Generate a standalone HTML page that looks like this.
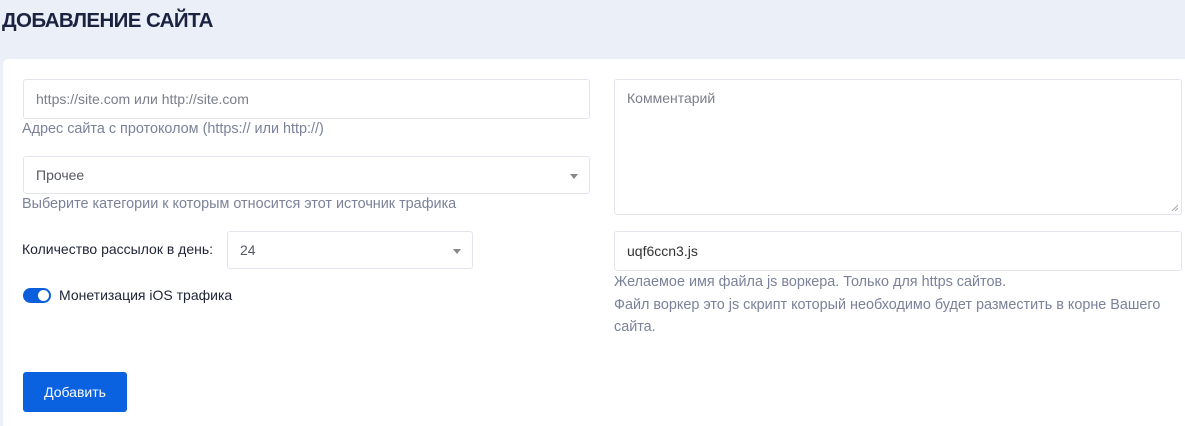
<!DOCTYPE html>
<html><head><meta charset="utf-8"><style>
*{box-sizing:border-box;margin:0;padding:0}
html,body{width:1185px;height:426px;overflow:hidden}
body{background:#ebeff8;font-family:"Liberation Sans",Arial,sans-serif;position:relative}
h1{position:absolute;left:2px;top:9px;font-size:20.5px;font-weight:bold;color:#1a2340;letter-spacing:-0.6px}
.card{position:absolute;left:3px;top:59px;width:1190px;height:380px;background:#fff;border-radius:5px}
.in{position:absolute;border:1px solid #e2e5ec;border-radius:3px;background:#fff;font-size:14px;color:#575962;padding-left:12px}
.ph{color:#7a7e8a}
.help{position:absolute;font-size:14.4px;color:#7b8299}
.arr{position:absolute;right:11px;top:17px;width:0;height:0;border-left:4px solid transparent;border-right:4px solid transparent;border-top:5px solid #888}
</style></head><body>
<h1>ДОБАВЛЕНИЕ САЙТА</h1>
<div class="card"></div>
<div class="in ph" style="left:23px;top:79px;width:567px;height:40px;line-height:38px">https://site.com или http://site.com</div>
<div class="help" style="left:22px;top:121px">Адрес сайта с протоколом (https:// или http://)</div>
<div class="in" style="left:23px;top:156px;width:567px;height:38px;line-height:36px">Прочее<span class="arr"></span></div>
<div class="help" style="left:22px;top:196px">Выберите категории к которым относится этот источник трафика</div>
<div style="position:absolute;left:22px;top:241px;font-size:14px;color:#1e2235">Количество рассылок в день:</div>
<div class="in" style="left:227px;top:231px;width:246px;height:38px;line-height:36px">24<span class="arr"></span></div>
<div style="position:absolute;left:23px;top:288px;width:28px;height:15px;border-radius:8px;background:#0b5fdc"><div style="position:absolute;right:2px;top:2px;width:11px;height:11px;border-radius:50%;background:#fff"></div></div>
<div style="position:absolute;left:59px;top:287px;font-size:14px;color:#1e2235">Монетизация iOS трафика</div>
<div style="position:absolute;left:23px;top:372px;width:104px;height:40px;border-radius:3px;background:#0b62e0;color:#fff;font-size:14px;line-height:40px;text-align:center">Добавить</div>
<div class="in ph" style="left:614px;top:79px;width:568px;height:136px;padding-top:10px">Комментарий
<svg style="position:absolute;right:3px;bottom:3px" width="7" height="7"><path d="M1 7L7 1M4 7L7 4" stroke="#aaa" stroke-width="1"/></svg></div>
<div class="in" style="left:614px;top:231px;width:568px;height:40px;line-height:38px;color:#333">uqf6ccn3.js</div>
<div class="help" style="left:614px;top:271px;line-height:22.5px;width:560px">Желаемое имя файла js воркера. Только для https сайтов.<br>Файл воркер это js скрипт который необходимо будет разместить в корне Вашего сайта.</div>
</body></html>
